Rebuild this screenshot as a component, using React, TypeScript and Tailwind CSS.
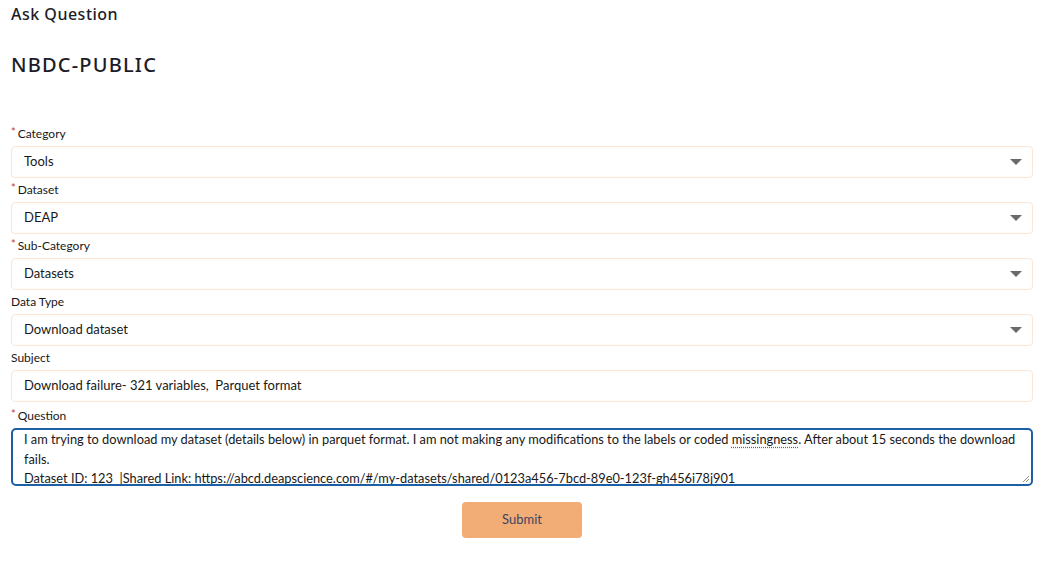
import React from 'react';

const fields = [
  { label: 'Category', value: 'Tools', required: true, select: true },
  { label: 'Dataset', value: 'DEAP', required: true, select: true },
  { label: 'Sub-Category', value: 'Datasets', required: true, select: true },
  { label: 'Data Type', value: 'Download dataset', required: false, select: true },
  { label: 'Subject', value: 'Download failure- 321 variables,  Parquet format', required: false, select: false },
];

function Label({ text, required }: { text: string; required?: boolean }) {
  return (
    <div className="h-[20px] leading-[16px] flex items-start text-[12px] text-[#181818]">
      {required && <span className="text-[#c23934] mr-[2px] text-[11px] leading-[12px]">*</span>}
      {text}
    </div>
  );
}

export default function App() {
  return (
    <div className="min-h-screen bg-white px-[11px] pt-[4px] text-[#181818]" style={{ fontFamily: 'Lato, "Liberation Sans", sans-serif' }}>
      <h1 className="text-[16px] font-medium h-[20px] leading-[20px] tracking-[0.5px] text-[#1c1c28]" style={{ fontFamily: '"Noto Sans", sans-serif' }}>
        Ask Question
      </h1>
      <h2 className="mt-[28px] text-[20px] font-medium leading-[26px] tracking-[1.2px] text-[#1c1c28]" style={{ fontFamily: '"Noto Sans", sans-serif' }}>
        NBDC-PUBLIC
      </h2>

      <form className="mt-[48px] flex flex-col">
        {fields.map(f => (
          <div key={f.label} className="mb-[4px]">
            <Label text={f.label} required={f.required} />
            <div className="h-[32px] border border-[#fbe5d5] rounded-[4px] flex items-center justify-between pl-[12px] pr-[10px] text-[13px]">
              <span className="whitespace-pre">{f.value}</span>
              {f.select && (
                <svg width="12" height="8" viewBox="0 0 12 8" className="text-[#6b6b6b]">
                  <path d="M0 1 L12 1 L6 7 Z" fill="currentColor" />
                </svg>
              )}
            </div>
          </div>
        ))}

        <div className="mt-[2px]">
          <Label text="Question" required />
          <div className="relative h-[58px] border-2 border-[#1b5fa6] rounded-[5px] pl-[11px] pr-[6px] pt-0 text-[12.8px] leading-[19.5px] overflow-hidden">
            <div>
              I am trying to download my dataset (details below) in parquet format. I am not making any modifications to the labels or coded{' '}
              <span className="underline decoration-dotted decoration-[#e0302a] underline-offset-[3px]">missingness</span>. After about 15 seconds the download fails.
            </div>
            <div className="whitespace-pre">
              {'Dataset ID: 123  |Shared Link: https://abcd.deapscience.com/#/my-datasets/shared/0123a456-7bcd-89e0-123f-gh456i78j901'}
            </div>
            <svg width="9" height="9" viewBox="0 0 9 9" className="absolute right-[1px] bottom-[1px] text-[#8a8a8a]">
              <path d="M8 2 L2 8 M8 5 L5 8" stroke="currentColor" strokeWidth="1" />
            </svg>
          </div>
        </div>

        <div className="flex justify-center mt-[16px]">
          <button type="button" className="w-[120px] h-[36px] rounded-[4px] bg-[#f2ac76] text-[13px] text-[#3b4463]">
            Submit
          </button>
        </div>
      </form>
    </div>
  );
}
